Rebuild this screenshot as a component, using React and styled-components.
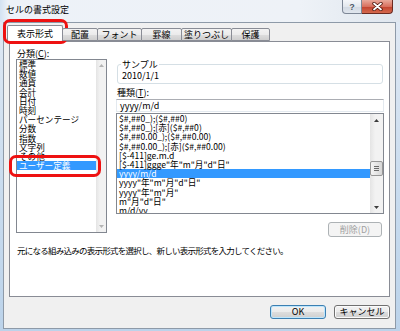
import React from "react";
import styled, { createGlobalStyle } from "styled-components";

const GlobalStyle = createGlobalStyle`
  html, body {
    margin: 0;
    padding: 0;
  }
  body {
    width: 400px;
    height: 331px;
    overflow: hidden;
    font-family: "Noto Sans CJK JP", "Noto Sans", sans-serif;
    font-size: 9px;
    color: #000;
  }
`;

const categories = [
  "標準",
  "数値",
  "通貨",
  "会計",
  "日付",
  "時刻",
  "パーセンテージ",
  "分数",
  "指数",
  "文字列",
  "その他",
  "ユーザー定義",
];

const formats = [
  "$#,##0_);($#,##0)",
  "$#,##0_);[赤]($#,##0)",
  "$#,##0.00_);($#,##0.00)",
  "$#,##0.00_);[赤]($#,##0.00)",
  "[$-411]ge.m.d",
  '[$-411]ggge"年"m"月"d"日"',
  "yyyy/m/d",
  'yyyy"年"m"月"d"日"',
  'yyyy"年"m"月"',
  'm"月"d"日"',
  "m/d/yy",
];

const tabs = [
  { label: "表示形式", width: 56 },
  { label: "配置", width: 36 },
  { label: "フォント", width: 45 },
  { label: "罫線", width: 41 },
  { label: "塗りつぶし", width: 51 },
  { label: "保護", width: 39 },
];

function Triangle({ up, color }) {
  return (
    <svg width="5" height="3" viewBox="0 0 5 3">
      <path d={up ? "M0 3 L2.5 0 L5 3 Z" : "M0 0 L5 0 L2.5 3 Z"} fill={color} />
    </svg>
  );
}

function App() {
  return (
    <>
      <GlobalStyle />
      <Window>
        <TitleBar>
          <Title>セルの書式設定</Title>
          <Controls>
            <HelpButton>?</HelpButton>
            <CloseButton>
              <svg width="11" height="9" viewBox="0 0 11 9">
                <path d="M2 1.5 L9 7.5 M9 1.5 L2 7.5" stroke="#4a1208" strokeWidth="3.4" strokeLinecap="round" />
                <path d="M2 1.5 L9 7.5 M9 1.5 L2 7.5" stroke="#ffffff" strokeWidth="1.8" strokeLinecap="round" />
              </svg>
            </CloseButton>
          </Controls>
        </TitleBar>
        <Frame>
          <Client>
            <TabRow>
              {tabs.map((t, i) => (
                <Tab key={t.label} $width={t.width} $active={i === 0}>
                  {t.label}
                  {i === 0 && <TabMark />}
                </Tab>
              ))}
            </TabRow>
            <Panel>
              <Columns>
                <LeftCol>
                  <FieldLabel>
                    分類(<u>C</u>):
                  </FieldLabel>
                  <ListBox $height={174}>
                    <Items>
                      {categories.map((c, i) => (
                        <Item key={c} $selected={i === 11}>
                          {c}
                        </Item>
                      ))}
                    </Items>
                    <ScrollBar $width={10}>
                      <Arrow $height={11}>
                        <Triangle up color="#b4b4b4" />
                      </Arrow>
                      <Track />
                      <Arrow $height={11}>
                        <Triangle color="#b4b4b4" />
                      </Arrow>
                    </ScrollBar>
                  </ListBox>
                  <ItemMark />
                </LeftCol>
                <RightCol>
                  <SampleBox>
                    <Legend>サンプル</Legend>
                    <SampleValue>2010/1/1</SampleValue>
                  </SampleBox>
                  <FieldLabel $top={4}>
                    種類(<u>T</u>):
                  </FieldLabel>
                  <TextBox>yyyy/m/d</TextBox>
                  <ListBox $height={101} $top={1}>
                    <Items>
                      {formats.map((f, i) => (
                        <Item key={f} $selected={i === 6} $pad={2}>
                          {f}
                        </Item>
                      ))}
                    </Items>
                    <ScrollBar $width={13}>
                      <Arrow $height={12}>
                        <Triangle up color="#3c3c3c" />
                      </Arrow>
                      <Track>
                        <Thumb>
                          <svg width="5" height="5" viewBox="0 0 5 5">
                            <path d="M0 0.5 H5 M0 2.5 H5 M0 4.5 H5" stroke="#6a6a6a" strokeWidth="1" />
                          </svg>
                        </Thumb>
                      </Track>
                      <Arrow $height={12}>
                        <Triangle color="#3c3c3c" />
                      </Arrow>
                    </ScrollBar>
                  </ListBox>
                  <DeleteButton disabled>削除(D)</DeleteButton>
                </RightCol>
              </Columns>
              <Hint>元になる組み込みの表示形式を選択し、新しい表示形式を入力してください。</Hint>
            </Panel>
            <ButtonRow>
              <DialogButton $default>OK</DialogButton>
              <DialogButton>キャンセル</DialogButton>
            </ButtonRow>
          </Client>
        </Frame>
      </Window>
    </>
  );
}

const Window = styled.div`
  width: 400px;
  height: 331px;
  display: flex;
  flex-direction: column;
  background: linear-gradient(to bottom, #e9eff7 0px, #dfe8f3 22px, #c8dbee 60%, #bcd3ea 100%);
`;

const TitleBar = styled.div`
  height: 22px;
  flex: none;
  display: flex;
  align-items: flex-start;
  background: linear-gradient(to right, #d3e2f2 0px, #edf2f8 8px, #eef2f7 75%, #dfe6ee 100%);
`;

const Title = styled.div`
  padding: 5px 0 0 6px;
  line-height: 10px;
  font-size: 9px;
  color: #000;
`;

const Controls = styled.div`
  margin-left: auto;
  margin-right: 7px;
  display: flex;
`;

const HelpButton = styled.div`
  width: 20px;
  height: 14px;
  box-sizing: border-box;
  border: 1px solid #7d8796;
  border-top: none;
  border-radius: 0 0 0 4px;
  background: linear-gradient(to bottom, #f5f7fa, #e3e8ee 50%, #d2d9e2 51%, #e0e6ee);
  display: flex;
  align-items: center;
  justify-content: center;
  font-family: "Liberation Sans", sans-serif;
  font-weight: bold;
  font-size: 9px;
  color: #4a5666;
  text-shadow: 0 0 1px #fff;
`;

const CloseButton = styled.div`
  width: 31px;
  height: 14px;
  box-sizing: border-box;
  border: 1px solid #6b2b22;
  border-left: none;
  border-top: none;
  border-radius: 0 0 4px 0;
  background: linear-gradient(to bottom, #e9a99b, #d8705e 50%, #c2412d 51%, #d46a4e);
  display: flex;
  align-items: center;
  justify-content: center;
`;

const Frame = styled.div`
  flex: 1;
  display: flex;
  padding: 0 4px 2px 3px;
`;

const Client = styled.div`
  flex: 1;
  display: flex;
  flex-direction: column;
  border: 1px solid #8e9aa8;
  background: #f0f0f0;
`;

const TabRow = styled.div`
  display: flex;
  align-items: flex-end;
  height: 16px;
  margin: 2px 0 0 3px;
  position: relative;
  z-index: 1;
`;

const Tab = styled.div`
  position: relative;
  box-sizing: border-box;
  width: ${(p) => p.$width}px;
  height: ${(p) => (p.$active ? 17 : 13)}px;
  margin-bottom: ${(p) => (p.$active ? -1 : 0)}px;
  margin-left: ${(p) => (p.$active ? 0 : -1)}px;
  border: 1px solid #898c95;
  border-bottom: ${(p) => (p.$active ? "none" : "1px solid #898c95")};
  border-radius: 2px 2px 0 0;
  background: ${(p) =>
    p.$active ? "#ffffff" : "linear-gradient(to bottom, #f3f3f3, #ebebeb 50%, #dddddd 51%, #cfcfcf)"};
  display: flex;
  align-items: center;
  justify-content: center;
  line-height: 10px;
  font-size: 9px;
  &:first-child {
    margin-left: 0;
  }
`;

const TabMark = styled.div`
  position: absolute;
  left: -5px;
  top: -7px;
  width: 65px;
  height: 25px;
  box-sizing: border-box;
  border: 3px solid #ee1111;
  border-radius: 7px;
`;

const Panel = styled.div`
  height: 256px;
  flex: none;
  box-sizing: border-box;
  margin: 0 5px;
  border: 1px solid #898c95;
  background: #ffffff;
  padding: 7px 5px 0 6px;
`;

const Columns = styled.div`
  display: flex;
  gap: 9px;
`;

const LeftCol = styled.div`
  position: relative;
  width: 91px;
  flex: none;
  display: flex;
  flex-direction: column;
`;

const RightCol = styled.div`
  flex: 1;
  display: flex;
  flex-direction: column;
`;

const FieldLabel = styled.div`
  margin: ${(p) => p.$top || 0}px 0 0 1px;
  line-height: 9px;
  height: 9px;
  font-size: 9px;
  u {
    text-decoration: underline;
  }
`;

const ListBox = styled.div`
  margin-top: ${(p) => (p.$top === undefined ? 1 : p.$top)}px;
  height: ${(p) => p.$height}px;
  box-sizing: border-box;
  border: 1px solid #828790;
  display: flex;
  background: #ffffff;
`;

const Items = styled.div`
  flex: 1;
  min-width: 0;
  overflow: hidden;
`;

const Item = styled.div`
  height: 9.2px;
  line-height: 9.2px;
  padding-left: ${(p) => p.$pad || 2}px;
  font-size: 8.6px;
  white-space: nowrap;
  background: ${(p) => (p.$selected ? "#3399ff" : "transparent")};
  color: ${(p) => (p.$selected ? "#ffffff" : "#000000")};
`;

const ItemMark = styled.div`
  position: absolute;
  left: -7px;
  top: 106px;
  width: 92px;
  height: 22px;
  box-sizing: border-box;
  border: 3px solid #ee1111;
  border-radius: 7px;
`;

const ScrollBar = styled.div`
  width: ${(p) => p.$width}px;
  flex: none;
  display: flex;
  flex-direction: column;
  background: linear-gradient(to right, #e4e4e4, #f2f2f2 40%, #f2f2f2);
`;

const Arrow = styled.div`
  height: ${(p) => p.$height}px;
  flex: none;
  display: flex;
  align-items: center;
  justify-content: center;
`;

const Track = styled.div`
  flex: 1;
  display: flex;
  flex-direction: column;
`;

const Thumb = styled.div`
  margin: 35px 0 0 0;
  height: 15px;
  box-sizing: border-box;
  border: 1px solid #979797;
  border-radius: 2px;
  background: linear-gradient(to right, #f4f4f4, #e6e6e6 50%, #d6d6d6);
  display: flex;
  align-items: center;
  justify-content: center;
`;

const SampleBox = styled.fieldset`
  margin: 11px 1px 0 1px;
  padding: 0 4px 3px 4px;
  min-inline-size: 0;
  border: 1px solid #d5dfe5;
  border-radius: 3px;
`;

const Legend = styled.legend`
  padding: 0 1px;
  margin-left: -1px;
  line-height: 9px;
  font-size: 9px;
`;

const SampleValue = styled.div`
  padding-top: 2px;
  line-height: 9px;
  height: 9px;
  font-size: 9px;
`;

const TextBox = styled.div`
  margin-top: 2px;
  height: 13px;
  box-sizing: border-box;
  border: 1px solid #e3e9ef;
  border-top-color: #abadb3;
  padding-left: 3px;
  line-height: 11px;
  font-size: 9px;
`;

const DeleteButton = styled.button`
  align-self: flex-end;
  margin: 8px 2px 0 0;
  width: 54px;
  height: 15px;
  padding: 0;
  box-sizing: border-box;
  border: 1px solid #adb2b5;
  border-radius: 3px;
  background: #f4f4f4;
  color: #a0a0a0;
  font-family: inherit;
  font-size: 9px;
  line-height: 12px;
`;

const Hint = styled.div`
  margin: 9px 0 0 1px;
  line-height: 9px;
  font-size: 8.5px;
  letter-spacing: -0.75px;
  white-space: nowrap;
`;

const ButtonRow = styled.div`
  display: flex;
  justify-content: flex-end;
  gap: 8px;
  margin: 8px 5px 0 0;
`;

const DialogButton = styled.div`
  width: 56px;
  height: 14px;
  box-sizing: border-box;
  border: 1px solid ${(p) => (p.$default ? "#3c7fb1" : "#707070")};
  border-radius: 3px;
  box-shadow: ${(p) => (p.$default ? "inset 0 0 0 1px #bde6fd" : "inset 0 0 0 1px #fbfbfb")};
  background: linear-gradient(to bottom, #f2f2f2, #ebebeb 50%, #dddddd 51%, #cfcfcf);
  display: flex;
  align-items: center;
  justify-content: center;
  font-size: 9px;
  line-height: 10px;
`;

export default App;
